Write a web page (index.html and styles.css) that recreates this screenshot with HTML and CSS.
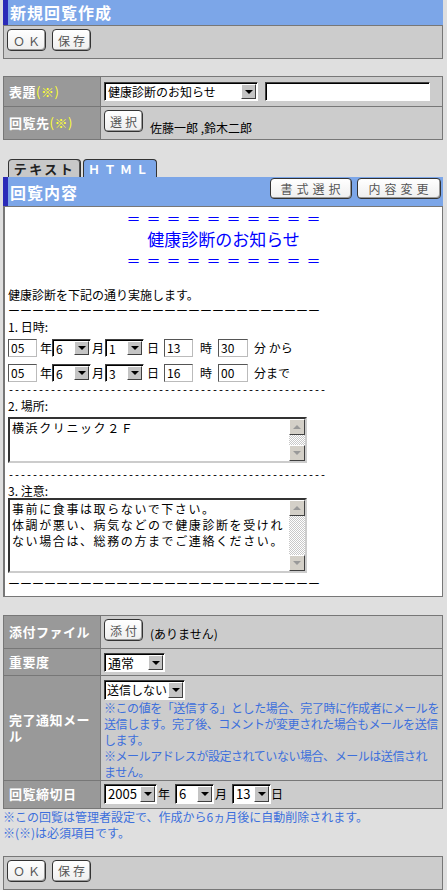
FILE: index.html
```html
<!DOCTYPE html>
<html lang="ja">

<head>
    <meta charset="UTF-8">
    <meta name="viewport" content="width=device-width, initial-scale=1.0">
    <title>新規回覧作成</title>
    <link rel="stylesheet" href="styles.css">
</head>

<body>
    <div class="title-bar">新規回覧作成</div>
    <div class="btn-box">
        <span class="btn">ＯＫ</span>
        <span class="btn">保存</span>
    </div>

    <table class="form-table table-top">
        <tr class="row-subject">
            <th>表題<span class="req">(※)</span></th>
            <td>
                <div class="line">
                    <span class="sel sel-subject"><span class="val">健康診断のお知らせ</span><span class="arr"></span></span>
                    <span class="txt txt-subject"></span>
                </div>
            </td>
        </tr>
        <tr class="row-to">
            <th>回覧先<span class="req">(※)</span></th>
            <td class="cell-top">
                <div class="line line-low">
                    <span class="btn">選択</span>
                    <span class="names">佐藤一郎 ,鈴木二郎</span>
                </div>
            </td>
        </tr>
    </table>

    <div class="tabs">
        <span class="tab tab-text">テキスト</span>
        <span class="tab tab-html">ＨＴＭＬ</span>
    </div>
    <div class="sec-bar">
        <span class="sec-title">回覧内容</span>
        <div class="sec-btns">
            <span class="btn btn-wide">書式選択</span>
            <span class="btn btn-wide2">内容変更</span>
        </div>
    </div>

    <div class="doc">
        <div class="doc-eq">＝＝＝＝＝＝＝＝＝＝</div>
        <div class="doc-title">健康診断のお知らせ</div>
        <div class="doc-eq">＝＝＝＝＝＝＝＝＝＝</div>
        <div class="blank"></div>
        <div class="p">健康診断を下記の通り実施します。</div>
        <div class="p rule">ーーーーーーーーーーーーーーーーーーーーーーーーーー</div>
        <div class="p">1. 日時:</div>
        <div class="date-row">
            <span class="in in-yy">05</span><span class="u u-nen">年</span>
            <span class="sel sel-sm"><span class="val">6</span><span class="arr"></span></span><span class="u u-tuki">月</span>
            <span class="sel sel-sm"><span class="val">1</span><span class="arr"></span></span><span class="u u-hi">日</span>
            <span class="in in-hh">13</span><span class="u u-ji">時</span>
            <span class="in in-mm">30</span><span class="u">分 から</span>
        </div>
        <div class="date-row date-row2">
            <span class="in in-yy">05</span><span class="u u-nen">年</span>
            <span class="sel sel-sm"><span class="val">6</span><span class="arr"></span></span><span class="u u-tuki">月</span>
            <span class="sel sel-sm"><span class="val">3</span><span class="arr"></span></span><span class="u u-hi">日</span>
            <span class="in in-hh">16</span><span class="u u-ji">時</span>
            <span class="in in-mm">00</span><span class="u">分まで</span>
        </div>
        <div class="dash">-----------------------------------------------------</div>
        <div class="p">2. 場所:</div>
        <div class="area area-place">
            <div class="area-text">横浜クリニック２Ｆ</div>
            <div class="scroll">
                <span class="sb-btn sb-up"></span>
                <span class="sb-track"></span>
                <span class="sb-btn sb-down"></span>
            </div>
        </div>
        <div class="dash dash2">-----------------------------------------------------</div>
        <div class="p p-short">3. 注意:</div>
        <div class="area area-note">
            <div class="area-text">事前に食事は取らないで下さい。<br>体調が悪い、病気などので健康診断を受けれ<br>ない場合は、総務の方までご連絡ください。</div>
            <div class="scroll">
                <span class="sb-btn sb-up"></span>
                <span class="sb-track"></span>
                <span class="sb-btn sb-down"></span>
            </div>
        </div>
        <div class="p rule p-end">ーーーーーーーーーーーーーーーーーーーーーーーーーー</div>
    </div>

    <table class="form-table table-bottom">
        <tr class="row-file">
            <th>添付ファイル</th>
            <td class="cell-top">
                <div class="line line-low">
                    <span class="btn">添付</span>
                    <span class="names names-file">(ありません)</span>
                </div>
            </td>
        </tr>
        <tr class="row-level">
            <th>重要度</th>
            <td>
                <span class="sel sel-level"><span class="val">通常</span><span class="arr"></span></span>
            </td>
        </tr>
        <tr class="row-mail">
            <th>完了通知メール</th>
            <td class="cell-top cell-mail">
                <span class="sel sel-mail"><span class="val">送信しない</span><span class="arr"></span></span>
                <div class="hint">※この値を「送信する」とした場合、完了時に作成者にメールを<br>送信します。完了後、コメントが変更された場合もメールを送信<br>します。<br>※メールアドレスが設定されていない場合、メールは送信され<br>ません。</div>
            </td>
        </tr>
        <tr class="row-limit">
            <th>回覧締切日</th>
            <td>
                <div class="line">
                    <span class="sel sel-year"><span class="val">2005</span><span class="arr"></span></span><span class="u u-limit">年</span>
                    <span class="sel sel-md"><span class="val">6</span><span class="arr"></span></span><span class="u u-limit">月</span>
                    <span class="sel sel-md"><span class="val">13</span><span class="arr"></span></span><span class="u">日</span>
                </div>
            </td>
        </tr>
    </table>

    <div class="notes">
        ※この回覧は管理者設定で、作成から6ヵ月後に自動削除されます。<br>
        ※(※)は必須項目です。
    </div>

    <div class="btn-box btn-box-bottom">
        <span class="btn">ＯＫ</span>
        <span class="btn">保存</span>
    </div>
</body>

</html>
```
FILE: styles.css
```css
body {
    margin: 0 4px 0 3px;
    background-color: #dfdfdf;
    font-family: "Noto Sans CJK JP", sans-serif;
    font-size: 12px;
    color: #000;
}

/* header bars */
.title-bar {
    height: 25px;
    background-color: #7ca6e8;
    border-left: 5px solid #2b2bb8;
    padding-left: 2px;
    color: #fff;
    font-weight: bold;
    font-size: 16px;
    letter-spacing: 1px;
    line-height: 25px;
}

.btn-box {
    box-sizing: border-box;
    height: 34px;
    background-color: #cccccc;
    border: 1px solid #777;
    display: flex;
    align-items: flex-start;
    gap: 6px;
    padding: 3px 0 0 3px;
}

.btn-box-bottom {
    margin-top: 15px;
}

.btn {
    box-sizing: border-box;
    display: inline-flex;
    align-items: center;
    justify-content: center;
    height: 22px;
    width: 39px;
    background: linear-gradient(#ffffff, #eeeeee);
    border: 1px solid #333;
    border-radius: 4px;
    box-shadow: inset -1px -1px 0 #9a9a9a;
    color: #555;
    font-size: 12px;
    letter-spacing: 3px;
    padding-left: 3px;
}

/* form tables */
.form-table {
    width: 100%;
    border-collapse: collapse;
}

.table-top {
    margin-top: 17px;
}

.table-bottom {
    margin-top: 18px;
}

.form-table th,
.form-table td {
    border: 1px solid #777;
    padding: 0 3px;
}

.form-table th {
    width: 85px;
    padding: 0 6px 0 5px;
    background-color: #999;
    color: #fff;
    font-weight: bold;
    font-size: 13px;
    letter-spacing: 0.5px;
    line-height: 16px;
    text-align: left;
    vertical-align: middle;
}

.form-table td {
    background-color: #cccccc;
    vertical-align: middle;
}

.form-table td.cell-top {
    vertical-align: top;
    padding-top: 3px;
}

.form-table td.cell-mail {
    padding-right: 0;
}

.req {
    color: #ffff33;
    font-weight: normal;
}

.row-subject th { height: 29px; }
.row-to th { height: 32px; }
.row-file th { height: 32px; }
.row-level th { height: 26px; }
.row-mail th { height: 103px; }
.row-limit th { height: 27px; }

.line {
    display: flex;
    align-items: center;
}

.line-low {
    align-items: flex-end;
}

.names {
    line-height: 16px;
    margin-left: 7px;
    margin-bottom: -4px;
}

.names-file {
    margin-bottom: -1px;
}

/* fake select and text boxes */
.sel {
    box-sizing: border-box;
    display: inline-flex;
    height: 19px;
    background-color: #fff;
    border: 1px solid;
    border-color: #404040 #fff #fff #404040;
    box-shadow: inset 1px 1px 0 #000;
    vertical-align: middle;
}

.sel .val {
    flex: 1;
    padding: 1px 0 0 3px;
    line-height: 15px;
    white-space: nowrap;
    overflow: hidden;
}

.arr {
    box-sizing: border-box;
    width: 15px;
    margin: 1px 1px 1px 0;
    background-color: #c4c4c4;
    border: 1px solid;
    border-color: #fff #404040 #404040 #fff;
    display: flex;
    align-items: center;
    justify-content: center;
}

.arr::after {
    content: "";
    border-left: 4px solid transparent;
    border-right: 4px solid transparent;
    border-top: 4px solid #000;
}

.sel-subject { width: 154px; }
.sel-level { width: 61px; }
.sel-mail { width: 81px; height: 20px; }
.sel-year { width: 53px; height: 20px; }
.sel-md { width: 39px; height: 20px; }
.sel-sm { width: 39px; height: 18px; }

.sel-year .val,
.sel-md .val,
.sel-level .val {
    font-size: 13px;
}

.sel-mail .val {
    padding-left: 2px;
    line-height: 16px;
}

.txt {
    box-sizing: border-box;
    height: 19px;
    background-color: #fff;
    border: 1px solid;
    border-color: #404040 #fff #fff #404040;
    box-shadow: inset 1px 1px 0 #000;
}

.txt-subject {
    width: 165px;
    margin-left: 7px;
}

.u {
    line-height: 18px;
}

.u-limit {
    margin: 0 5px 0 1px;
}

.hint {
    color: #3c6fdc;
    line-height: 16px;
    letter-spacing: -0.45px;
    white-space: nowrap;
}

/* tabs and section bar */
.tabs {
    display: flex;
    align-items: flex-end;
    gap: 2px;
    height: 18px;
    margin-top: 19px;
    padding-left: 5px;
}

.tab {
    box-sizing: border-box;
    height: 18px;
    border: 1px solid #333;
    border-bottom: none;
    border-radius: 4px 4px 0 0;
    font-weight: bold;
    font-size: 13px;
    line-height: 17px;
    text-align: center;
}

.tab-text {
    width: 73px;
    background-color: #c8c8c8;
    color: #222;
    letter-spacing: 2.5px;
    box-shadow: inset -1px 0 0 #555;
}

.tab-html {
    width: 74px;
    background-color: #7ca6e8;
    color: #fff;
    font-size: 12px;
    letter-spacing: 4px;
}

.sec-bar {
    height: 29px;
    background-color: #7ca6e8;
    border-left: 5px solid #2b2bb8;
    padding: 0 2px;
    display: flex;
    align-items: center;
    justify-content: space-between;
}

.sec-title {
    color: #fff;
    font-weight: bold;
    font-size: 16px;
    letter-spacing: 1px;
}

.sec-btns {
    align-self: flex-start;
    margin-top: 1px;
    display: flex;
    gap: 5px;
}

.btn-wide { width: 82px; height: 21px; letter-spacing: 4px; }
.btn-wide2 { width: 84px; height: 21px; letter-spacing: 4px; }

/* document body */
.doc {
    box-sizing: border-box;
    height: 391px;
    overflow: hidden;
    background-color: #fff;
    border: 1px solid #777;
    border-left-width: 2px;
    padding: 2px 0 0 3px;
}

.doc-eq {
    color: #0000ff;
    font-size: 14px;
    letter-spacing: 6px;
    line-height: 18px;
    text-align: center;
    margin-left: 3px;
}

.doc-title {
    color: #0000ff;
    font-size: 17px;
    line-height: 24px;
    text-align: center;
    margin-left: -3px;
}

.blank {
    height: 18px;
}

.p {
    line-height: 16px;
    white-space: nowrap;
}

.rule {
    letter-spacing: 0;
}

.p-short {
    line-height: 14px;
}

.p-end {
    margin-top: 3px;
}

.dash {
    font-family: "Liberation Mono", monospace;
    font-size: 10px;
    line-height: 14px;
    white-space: nowrap;
}

.dash2 {
    margin-top: 5px;
    line-height: 16px;
}

.date-row {
    display: flex;
    align-items: center;
    height: 22px;
    margin-top: 2px;
}

.date-row2 {
    margin-top: 3px;
}

.in {
    box-sizing: border-box;
    height: 18px;
    background-color: #fff;
    border: 1px solid;
    border-color: #555 #bbb #bbb #555;
    padding-left: 2px;
    line-height: 16px;
}

.in-yy { width: 29px; margin-right: 3px; }
.in-hh { width: 29px; }
.in-mm { width: 30px; }
.u-nen { margin-right: 0; }
.u-tuki { margin: 0 1px 0 1px; }
.u-hi { margin: 0 5px 0 3px; }
.u-ji { margin: 0 6px 0 7px; }
.in-mm + .u { margin-left: 6px; }

.area {
    box-sizing: border-box;
    display: flex;
    width: 299px;
    margin-top: 3px;
    background-color: #fff;
    border: 2px solid;
    border-color: #333 #ccc #ccc #333;
}

.area-place { height: 46px; }
.area-note { height: 75px; margin-top: 0; }

.area-text {
    flex: 1;
    padding: 1px 2px;
    font-size: 12px;
    letter-spacing: 1.6px;
    line-height: 16px;
    white-space: nowrap;
    overflow: hidden;
}

.scroll {
    width: 16px;
    display: flex;
    flex-direction: column;
}

.sb-btn {
    box-sizing: border-box;
    height: 16px;
    background-color: #d4d0c8;
    border: 1px solid;
    border-color: #fff #404040 #404040 #fff;
    display: flex;
    align-items: center;
    justify-content: center;
}

.sb-up::after {
    content: "";
    border-left: 4px solid transparent;
    border-right: 4px solid transparent;
    border-bottom: 4px solid #999;
}

.sb-down::after {
    content: "";
    border-left: 4px solid transparent;
    border-right: 4px solid transparent;
    border-top: 4px solid #999;
}

.sb-track {
    flex: 1;
    background-image: repeating-conic-gradient(#c8c8c8 0 25%, #fff 0 50%);
    background-size: 2px 2px;
}

.notes {
    color: #3c6fdc;
    line-height: 16px;
}
```
